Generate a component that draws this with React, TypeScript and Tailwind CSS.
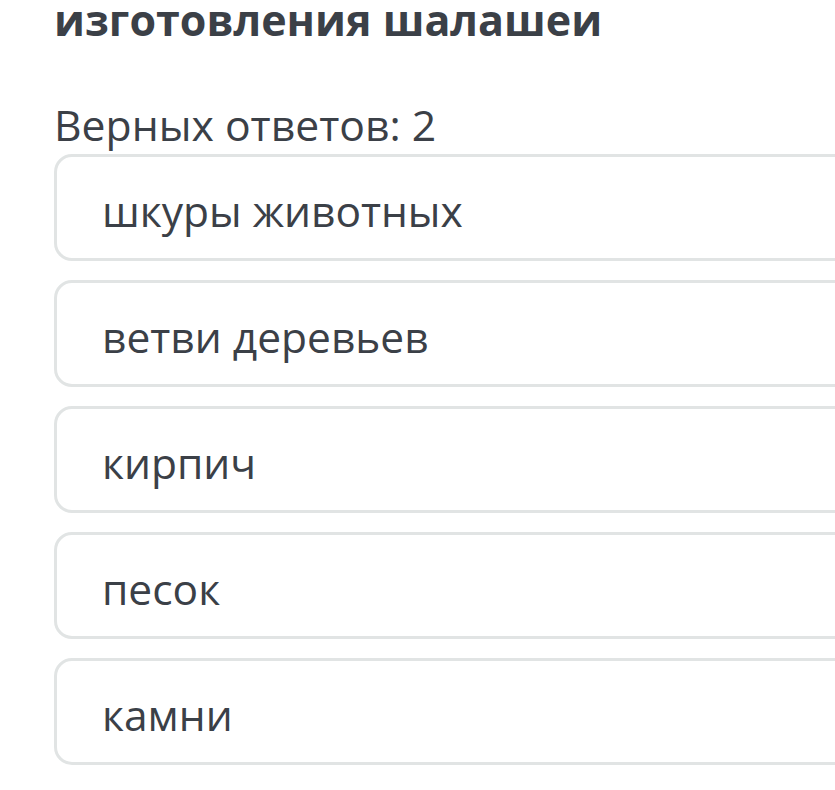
const options: string[] = [
  "шкуры животных",
  "ветви деревьев",
  "кирпич",
  "песок",
  "камни",
];

export default function App() {
  return (
    <div className="w-[835px] h-[790px] overflow-hidden bg-white font-['Open_Sans',sans-serif] text-[#3b4047]">
      <div className="w-[900px] pl-[54px]">
        {/* Вопрос */}
        <h1 className="-mt-[8px] text-[43px] leading-[56px] font-bold">
          изготовления шалашеи
        </h1>

        <p className="mt-[54px] text-[42.7px] leading-[46px]">Верных ответов: 2</p>

        {/* Варианты */}
        <div className="mt-[6px] flex flex-col gap-[19px]">
          {options.map((option: string) => (
            <div
              key={option}
              className="h-[107px] pt-[33px] pl-[45px] rounded-[18px] border-[3px] border-[#e1e4e4] bg-white"
            >
              <span className="block text-[42.5px] leading-none">{option}</span>
            </div>
          ))}
        </div>
      </div>
    </div>
  );
}
